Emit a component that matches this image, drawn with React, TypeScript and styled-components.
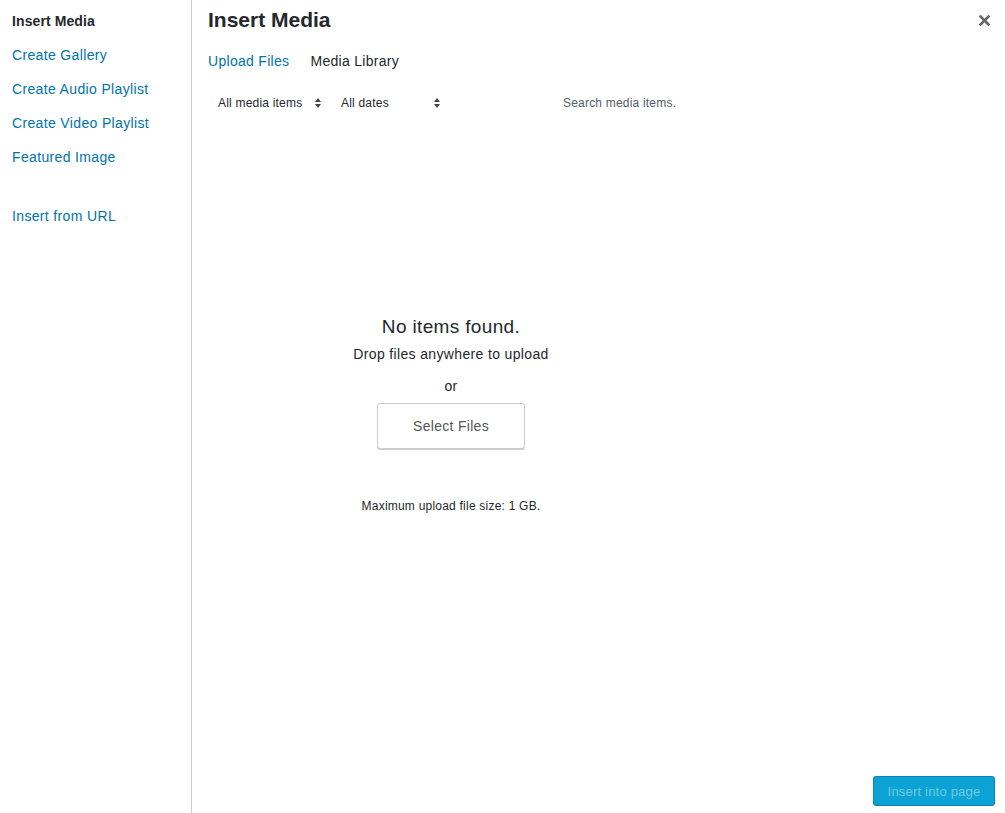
import React from "react";
import styled, { createGlobalStyle } from "styled-components";

const Global = createGlobalStyle`
  html, body { margin: 0; padding: 0; background: #fff; }
  body { font-family: "Liberation Sans", Arial, sans-serif; color: #23282d; }
  * { box-sizing: border-box; }
`;

const Frame = styled.div`
  display: flex;
  width: 1005px;
  height: 813px;
  overflow: hidden;
`;

const Sidebar = styled.nav`
  width: 192px;
  flex: none;
  border-right: 1px solid #cccccc;
  padding-top: 12px;
  display: flex;
  flex-direction: column;
`;

const MenuItem = styled.a<{ $active?: boolean; $gapBefore?: boolean }>`
  display: block;
  padding: 0 12px;
  height: 34px;
  line-height: 18px;
  font-size: 14px;
  letter-spacing: ${(p) => (p.$active ? "0.1px" : "0.35px")};
  text-decoration: none;
  color: ${(p) => (p.$active ? "#23282d" : "#0073aa")};
  font-weight: ${(p) => (p.$active ? 700 : 400)};
  margin-top: ${(p) => (p.$gapBefore ? "25px" : "0")};
`;

const Main = styled.div`
  flex: 1;
  display: flex;
  flex-direction: column;
  min-width: 0;
`;

const Header = styled.div`
  display: flex;
  justify-content: space-between;
  align-items: flex-start;
  padding: 6px 15px 0 16px;
  height: 42px;
`;

const Title = styled.h1`
  margin: 0;
  font-size: 21px;
  line-height: 28px;
  font-weight: 700;
  color: #23282d;
`;

const Close = styled.button`
  border: none;
  background: none;
  padding: 0;
  margin-top: 8px;
  width: 12px;
  height: 12px;
  display: flex;
  align-items: center;
  justify-content: center;
  cursor: pointer;
`;

const Tabs = styled.div`
  display: flex;
  gap: 21px;
  padding: 0 16px;
  height: 38px;
  align-items: center;
`;

const Tab = styled.a<{ $current?: boolean }>`
  font-size: 14px;
  letter-spacing: 0.3px;
  text-decoration: none;
  color: ${(p) => (p.$current ? "#23282d" : "#0073aa")};
`;

const Body = styled.div`
  flex: 1;
  display: grid;
  grid-template-columns: 518px 1fr;
  min-height: 0;
`;

const Content = styled.div`
  display: flex;
  flex-direction: column;
`;

const Toolbar = styled.div`
  display: flex;
  align-items: center;
  height: 32px;
  margin-top: 7px;
  padding-left: 26px;
  font-size: 12px;
  letter-spacing: 0.2px;
  color: #23282d;
`;

const Select = styled.div<{ $width: number }>`
  width: ${(p) => p.$width}px;
  display: flex;
  align-items: center;
  justify-content: space-between;
  padding-right: ${(p) => (p.$width > 106 ? 4 : 7)}px;
  margin-right: 16px;
`;

const Search = styled.div`
  margin-left: 100px;
  font-size: 12px;
  color: #555d66;
`;

const Empty = styled.div`
  display: flex;
  flex-direction: column;
  align-items: center;
  padding-top: 196px;
  letter-spacing: 0.35px;
`;

const EmptyTitle = styled.div`
  font-size: 19px;
  line-height: 24px;
  color: #23282d;
`;

const Drop = styled.div`
  font-size: 14px;
  line-height: 18px;
  margin-top: 6px;
`;

const Or = styled.div`
  font-size: 14px;
  margin-top: 14px;
  line-height: 18px;
`;

const SelectButton = styled.button`
  margin-top: 8px;
  width: 148px;
  height: 46px;
  background: #fff;
  border: 1px solid #cccccc;
  border-radius: 3px;
  box-shadow: 0 1px 0 #cccccc;
  font-family: inherit;
  font-size: 14px;
  letter-spacing: 0.3px;
  color: #555;
`;

const MaxSize = styled.div`
  font-size: 12px;
  letter-spacing: 0.22px;
  margin-top: 50px;
`;

const Footer = styled.div`
  display: flex;
  justify-content: flex-end;
  padding: 0 10px 7px 0;
`;

const Primary = styled.button`
  width: 122px;
  height: 30px;
  background: #0ca2d3;
  border: 1px solid #0880b8;
  border-radius: 3px;
  color: #6fcbe3;
  font-family: inherit;
  font-size: 13px;
  letter-spacing: 0.2px;
`;

const Arrows = () => (
  <svg width="6" height="10" viewBox="0 0 6 10">
    <path d="M0 4 L3 0 L6 4 Z M0 6 L3 10 L6 6 Z" fill="#444" />
  </svg>
);

export default function App() {
  return (
    <>
      <Global />
      <Frame>
        <Sidebar>
          <MenuItem $active>Insert Media</MenuItem>
          <MenuItem href="#">Create Gallery</MenuItem>
          <MenuItem href="#">Create Audio Playlist</MenuItem>
          <MenuItem href="#">Create Video Playlist</MenuItem>
          <MenuItem href="#">Featured Image</MenuItem>
          <MenuItem href="#" $gapBefore>Insert from URL</MenuItem>
        </Sidebar>
        <Main>
          <Header>
            <Title>Insert Media</Title>
            <Close aria-label="Close">
              <svg width="11" height="11" viewBox="0 0 11 11">
                <path d="M1.5 1.5 L9.5 9.5 M9.5 1.5 L1.5 9.5" stroke="#666" strokeWidth="2.6" strokeLinecap="square" />
              </svg>
            </Close>
          </Header>
          <Tabs>
            <Tab href="#">Upload Files</Tab>
            <Tab $current>Media Library</Tab>
          </Tabs>
          <Body>
            <Content>
              <Toolbar>
                <Select $width={107}>
                  <span>All media items</span>
                  <Arrows />
                </Select>
                <Select $width={106}>
                  <span>All dates</span>
                  <Arrows />
                </Select>
                <Search>Search media items.</Search>
              </Toolbar>
              <Empty>
                <EmptyTitle>No items found.</EmptyTitle>
                <Drop>Drop files anywhere to upload</Drop>
                <Or>or</Or>
                <SelectButton>Select Files</SelectButton>
                <MaxSize>Maximum upload file size: 1 GB.</MaxSize>
              </Empty>
            </Content>
            <div />
          </Body>
          <Footer>
            <Primary disabled>Insert into page</Primary>
          </Footer>
        </Main>
      </Frame>
    </>
  );
}
